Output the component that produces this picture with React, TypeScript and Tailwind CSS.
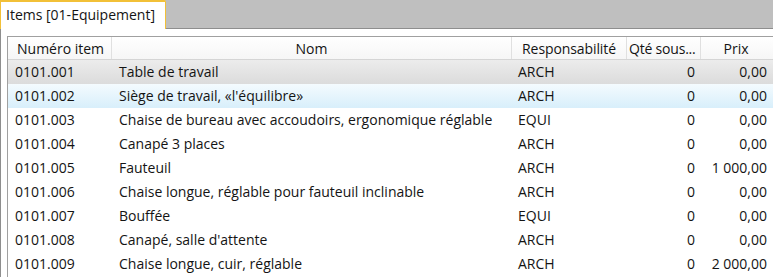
import React from "react";

const rows = [
  ["0101.001", "Table de travail", "ARCH", "0", "0,00"],
  ["0101.002", "Siège de travail, «l'équilibre»", "ARCH", "0", "0,00"],
  ["0101.003", "Chaise de bureau avec accoudoirs, ergonomique réglable", "EQUI", "0", "0,00"],
  ["0101.004", "Canapé 3 places", "ARCH", "0", "0,00"],
  ["0101.005", "Fauteuil", "ARCH", "0", "1 000,00"],
  ["0101.006", "Chaise longue, réglable pour fauteuil inclinable", "ARCH", "0", "0,00"],
  ["0101.007", "Bouffée", "EQUI", "0", "0,00"],
  ["0101.008", "Canapé, salle d'attente", "ARCH", "0", "0,00"],
  ["0101.009", "Chaise longue, cuir, réglable", "ARCH", "0", "2 000,00"],
];

export default function App() {
  return (
    <div
      className="w-[773px] h-[277px] overflow-hidden bg-[#bfbfbf] flex flex-col text-[14px] text-[#141414]"
      style={{ fontFamily: "'Open Sans', 'Noto Sans', sans-serif" }}
    >
      {/* Tab strip */}
      <div className="h-[29px] flex shrink-0">
        <div className="w-[166px] h-[29px] bg-white border-t-2 border-l border-r border-[#f2c037] rounded-tr-[2px] px-[5px] pt-[2px] relative z-10 whitespace-nowrap">
          Items [01-Equipement]
        </div>
      </div>

      {/* Panel */}
      <div className="flex-1 bg-white border-t border-l border-[#8e8e8e] -mt-px pl-[6px] pt-[7px]">
        <div className="border-l border-t border-[#a0a0a0] h-full">
          {/* Header */}
          <div className="flex h-[23px] border-b border-[#d5d5d5] bg-gradient-to-b from-white to-[#f6f6f6] items-center whitespace-nowrap">
            <div className="w-[104px] pl-[9px] border-r border-[#e0e0e0] h-full flex items-center">Numéro item</div>
            <div className="w-[400px] border-r border-[#e0e0e0] h-full flex items-center justify-center">Nom</div>
            <div className="w-[115px] border-r border-[#e0e0e0] h-full flex items-center justify-center tracking-[-0.1px]">Responsabilité</div>
            <div className="w-[74px] border-r border-[#e0e0e0] h-full flex items-center pl-[2px] tracking-[-0.2px] overflow-hidden">Qté sous...</div>
            <div className="w-[70px] h-full flex items-center justify-center">Prix</div>
          </div>

          {/* Rows */}
          {rows.map((r, i) => (
            <div
              key={r[0]}
              className={
                "flex h-[24px] items-center border-b whitespace-nowrap " +
                (i === 0
                  ? "bg-gradient-to-b from-[#ececec] to-[#dcdcdc] border-[#dcdcdc]"
                  : i === 1
                  ? "bg-gradient-to-b from-[#f4fbfe] to-[#d9effb] border-[#d9effb]"
                  : "border-transparent")
              }
            >
              <div className="w-[104px] pl-[7px]">{r[0]}</div>
              <div className="w-[400px] pl-[7px]">{r[1]}</div>
              <div className="w-[115px] pl-[6px]">{r[2]}</div>
              <div className="w-[74px] text-right pr-[6px]">{r[3]}</div>
              <div className="w-[70px] text-right pr-[4px]">{r[4]}</div>
            </div>
          ))}
        </div>
      </div>
    </div>
  );
}
